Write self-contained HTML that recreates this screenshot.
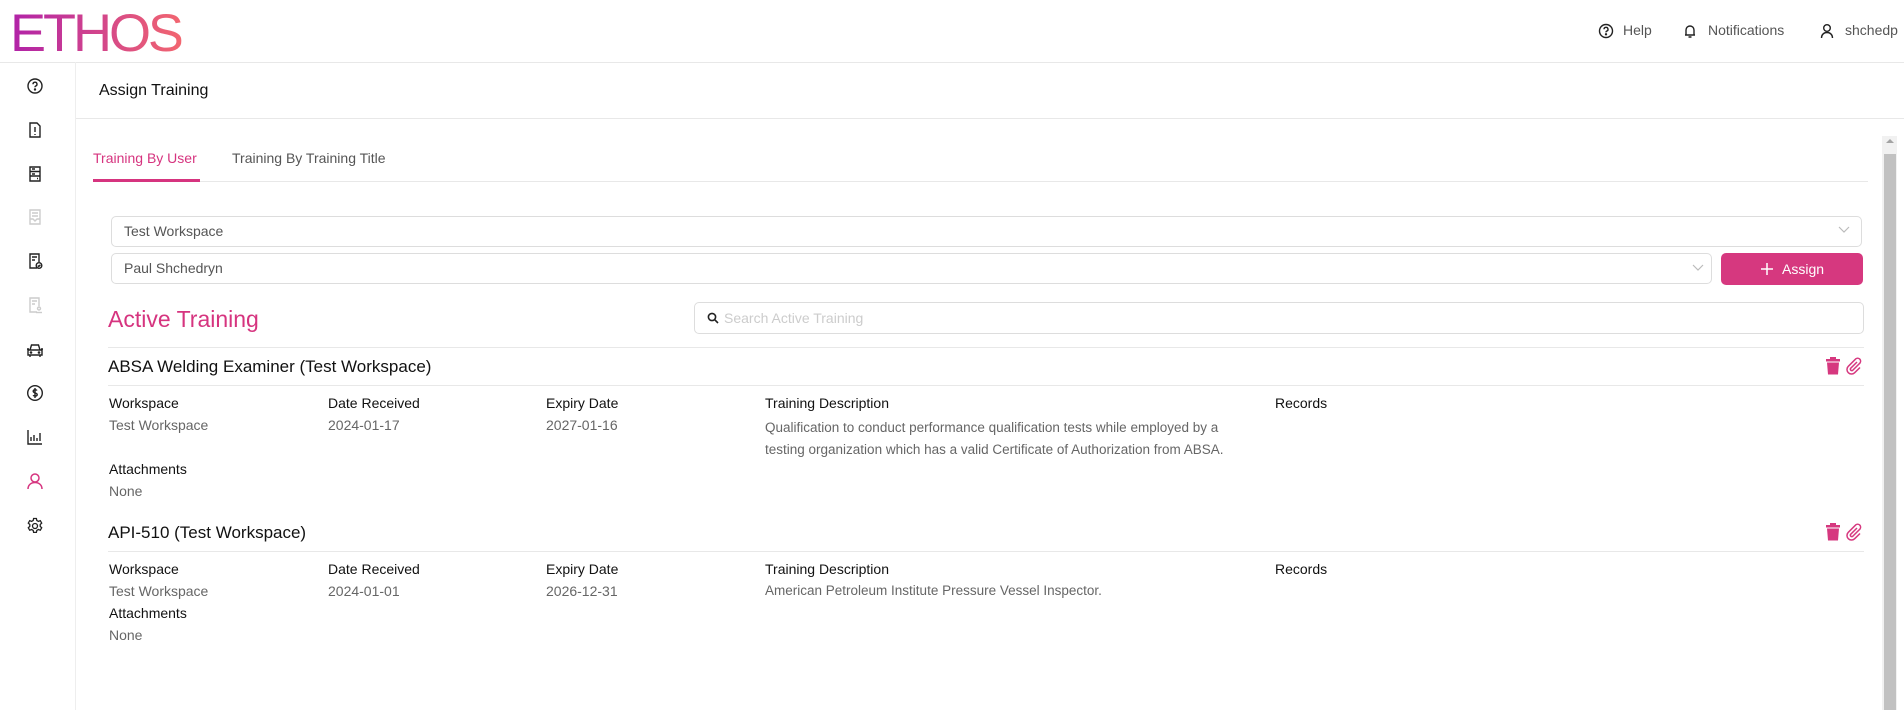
<!DOCTYPE html>
<html><head><meta charset="utf-8"><style>
*{margin:0;padding:0;box-sizing:border-box}
body{width:1904px;height:710px;overflow:hidden;background:#fff;font-family:"Liberation Sans",sans-serif;color:#222;position:relative}
.a{position:absolute;white-space:nowrap}
.hl{position:absolute;height:1px;background:#e8e8e8}
.lbl{font-size:14px;color:#111}
.val{font-size:14px;color:#666}
.ic{position:absolute;left:26px;width:18px;height:18px}
</style></head><body>
<div class="a" style="left:10px;top:4px;font-size:53px;letter-spacing:-3px;font-family:'Liberation Sans',sans-serif;background:linear-gradient(90deg,#b022a8,#f26670);-webkit-background-clip:text;color:transparent;line-height:60px;transform:scaleX(1.02);transform-origin:left">ETHOS</div>
<div class="hl" style="left:0;top:62px;width:1904px"></div>
<div style="position:absolute;left:75px;top:62px;width:1px;height:648px;background:#eee"></div>

<!-- header right -->
<svg class="a" style="left:1598px;top:23px" width="16" height="16" viewBox="0 0 16 16" fill="none" stroke="#222" stroke-width="1.4"><circle cx="8" cy="8" r="6.5"/><path d="M6 6.3a2 2 0 1 1 2.6 1.9c-.5.2-.6.6-.6 1.2"/><circle cx="8" cy="11.3" r=".5" fill="#222"/></svg>
<div class="a" style="left:1623px;top:22px;font-size:14px;color:#555">Help</div>
<svg class="a" style="left:1683px;top:23px" width="14" height="16" viewBox="0 0 14 16" fill="none" stroke="#222" stroke-width="1.4"><path d="M3 12V7a4 4 0 0 1 8 0v5H2h10M5.5 14h3"/></svg>
<div class="a" style="left:1708px;top:22px;font-size:14px;color:#555">Notifications</div>
<svg class="a" style="left:1820px;top:23px" width="14" height="16" viewBox="0 0 14 16" fill="none" stroke="#222" stroke-width="1.4"><circle cx="7" cy="5" r="3.3"/><path d="M1.5 15c0-3.5 2.5-5.5 5.5-5.5s5.5 2 5.5 5.5"/></svg>
<div class="a" style="left:1845px;top:22px;font-size:14px;color:#555">shchedp</div>

<!-- sidebar -->
<svg class="ic" style="top:77px" viewBox="0 0 18 18" fill="none" stroke="#222" stroke-width="1.4"><circle cx="9" cy="9" r="7"/><path d="M7 7.2a2 2 0 1 1 2.6 1.9c-.5.2-.6.6-.6 1.2"/><circle cx="9" cy="12.5" r=".5" fill="#222"/></svg>
<svg class="ic" style="top:121px" viewBox="0 0 18 18" fill="none" stroke="#222" stroke-width="1.4"><path d="M4 2h7l3 3v11H4z M9 6v5 M9 13v1"/></svg>
<svg class="ic" style="top:165px" viewBox="0 0 18 18" fill="none" stroke="#222" stroke-width="1.4"><path d="M4 2h10v14H4z M4 6.5h10 M4 11h10 M6 4h3 M6 9h3 M11 13.5h1"/></svg>
<svg class="ic" style="top:208px" viewBox="0 0 18 18" fill="none" stroke="#ccc" stroke-width="1.4"><path d="M4 2h10v14H4z M6 5h6 M6 8h6 M4 11h3l2 2 2-2h3"/></svg>
<svg class="ic" style="top:252px" viewBox="0 0 18 18" fill="none" stroke="#222" stroke-width="1.4"><path d="M11 16H4V2h9v8 M6 5h5 M6 8h3"/><circle cx="13" cy="13.5" r="2.8"/><path d="M11.8 13.5l1 1 1.6-1.7"/></svg>
<svg class="ic" style="top:296px" viewBox="0 0 18 18" fill="none" stroke="#ccc" stroke-width="1.4"><path d="M11 16H4V2h9v8 M6 5h5 M6 8h3"/><circle cx="13" cy="12.5" r="1.5"/><path d="M10 16.5h6"/></svg>
<svg class="ic" style="top:341px" viewBox="0 0 18 18" fill="none" stroke="#222" stroke-width="1.4"><path d="M2 9h14v5H2z M4 9l1.5-5h7L14 9 M4 14v2 M14 14v2 M1 8h2 M15 8h2"/><circle cx="5" cy="11.5" r=".6" fill="#222"/><circle cx="13" cy="11.5" r=".6" fill="#222"/></svg>
<svg class="ic" style="top:384px" viewBox="0 0 18 18" fill="none" stroke="#222" stroke-width="1.4"><circle cx="9" cy="9" r="7.3"/><path d="M11 6.5c-.5-.8-3.8-1.2-3.8.8 0 2 4 1.2 4 3.3 0 2-3.5 1.6-4 .6 M9 4v10"/></svg>
<svg class="ic" style="top:428px" viewBox="0 0 18 18" fill="none" stroke="#222" stroke-width="1.4"><path d="M2 2v14h14 M5 13V9 M8 13V7 M11 13v-3 M14 13V5"/></svg>
<svg class="ic" style="top:472px" viewBox="0 0 18 18" fill="none" stroke="#d6347f" stroke-width="1.5"><circle cx="9" cy="6" r="4"/><path d="M2 17c0-4 3-6.5 7-6.5s7 2.5 7 6.5"/></svg>
<svg class="ic" style="top:517px" viewBox="0 0 18 18" fill="none" stroke="#222" stroke-width="1.3"><circle cx="9" cy="9" r="2.5"/><path d="M7.6 1.5h2.8l.4 2 1.6.9 1.9-.7 1.4 2.4-1.5 1.4v1.9l1.5 1.4-1.4 2.4-1.9-.7-1.6.9-.4 2H7.6l-.4-2-1.6-.9-1.9.7-1.4-2.4 1.5-1.4V7.5L2.3 6.1l1.4-2.4 1.9.7 1.6-.9z"/></svg>

<!-- content -->
<div class="a" style="left:99px;top:82px;font-size:16px;color:#111">Assign Training</div>
<div class="hl" style="left:76px;top:118px;width:1828px"></div>
<div style="position:absolute;left:1882px;top:136px;width:15px;height:574px;background:#f1f1f1"></div>
<div style="position:absolute;left:1884px;top:154px;width:12px;height:556px;background:#c1c1c1"></div>
<div class="a" style="left:1886px;top:139px;width:0;height:0;border-left:4px solid transparent;border-right:4px solid transparent;border-bottom:4px solid #a3a3a3"></div>

<div class="a" style="left:93px;top:150px;font-size:14px;color:#d6347f">Training By User</div>
<div class="a" style="left:232px;top:150px;font-size:14px;color:#555">Training By Training Title</div>
<div class="hl" style="left:93px;top:181px;width:1775px"></div>
<div style="position:absolute;left:93px;top:179px;width:107px;height:3px;background:#d6347f"></div>

<div style="position:absolute;left:111px;top:216px;width:1751px;height:31px;border:1px solid #ddd;border-radius:5px"></div>
<div class="a" style="left:124px;top:223px;font-size:14px;color:#555">Test Workspace</div>
<svg class="a" style="left:1838px;top:226px" width="12" height="8" viewBox="0 0 12 8" fill="none" stroke="#bbb" stroke-width="1.2"><path d="M1 1l5 5 5-5"/></svg>
<div style="position:absolute;left:111px;top:253px;width:1601px;height:31px;border:1px solid #ddd;border-radius:5px"></div>
<div class="a" style="left:124px;top:260px;font-size:14px;color:#555">Paul Shchedryn</div>
<svg class="a" style="left:1692px;top:264px" width="12" height="8" viewBox="0 0 12 8" fill="none" stroke="#bbb" stroke-width="1.2"><path d="M1 1l5 5 5-5"/></svg>
<div style="position:absolute;left:1721px;top:253px;width:142px;height:32px;background:#d6387f;border-radius:5px"></div>
<svg class="a" style="left:1760px;top:262px" width="14" height="14" viewBox="0 0 14 14" stroke="#fff" stroke-width="1.5"><path d="M7 1v12M1 7h12"/></svg>
<div class="a" style="left:1782px;top:261px;font-size:14px;color:#fff">Assign</div>

<div class="a" style="left:108px;top:306px;font-size:23px;color:#d6347f">Active Training</div>
<div style="position:absolute;left:694px;top:302px;width:1170px;height:32px;border:1px solid #ddd;border-radius:5px"></div>
<svg class="a" style="left:707px;top:312px" width="12" height="12" viewBox="0 0 12 12" fill="none" stroke="#222" stroke-width="1.6"><circle cx="5" cy="5" r="3.6"/><path d="M7.7 7.7L11 11"/></svg>
<div class="a" style="left:724px;top:310px;font-size:14px;color:#ccc">Search Active Training</div>
<div class="hl" style="left:108px;top:347px;width:1756px"></div>

<div class="a" style="left:108px;top:357px;font-size:17px;color:#111">ABSA Welding Examiner (Test Workspace)</div>
<div class="hl" style="left:108px;top:385px;width:1756px"></div>
<svg class="a" style="left:1825px;top:357px" width="16" height="18" viewBox="0 0 16 18" fill="#d6387f"><rect x="1" y="2" width="14" height="2.5"/><rect x="5" y="0" width="6" height="2"/><path d="M2 5.5h12l-1 12H3z"/></svg>
<svg class="a" style="left:1845px;top:357px" width="18" height="18" viewBox="0 0 18 18" fill="none" stroke="#d6387f" stroke-width="1.5"><path d="M12 5l-6.5 6.5a1.5 1.5 0 0 0 2 2L15 6a3 3 0 0 0-4.2-4.2L3.3 9.3a4.5 4.5 0 0 0 6.4 6.4L15 10.5"/></svg>

<div class="a lbl" style="left:109px;top:395px">Workspace</div>
<div class="a val" style="left:109px;top:417px">Test Workspace</div>
<div class="a lbl" style="left:328px;top:395px">Date Received</div>
<div class="a val" style="left:328px;top:417px">2024-01-17</div>
<div class="a lbl" style="left:546px;top:395px">Expiry Date</div>
<div class="a val" style="left:546px;top:417px">2027-01-16</div>
<div class="a lbl" style="left:765px;top:395px">Training Description</div>
<div class="a val" style="left:765px;top:417px;font-size:13.5px;line-height:22px">Qualification to conduct performance qualification tests while employed by a<br>testing organization which has a valid Certificate of Authorization from ABSA.</div>
<div class="a lbl" style="left:1275px;top:395px">Records</div>
<div class="a lbl" style="left:109px;top:461px">Attachments</div>
<div class="a val" style="left:109px;top:483px">None</div>

<div class="a" style="left:108px;top:523px;font-size:17px;color:#111">API-510 (Test Workspace)</div>
<div class="hl" style="left:108px;top:551px;width:1756px"></div>
<svg class="a" style="left:1825px;top:523px" width="16" height="18" viewBox="0 0 16 18" fill="#d6387f"><rect x="1" y="2" width="14" height="2.5"/><rect x="5" y="0" width="6" height="2"/><path d="M2 5.5h12l-1 12H3z"/></svg>
<svg class="a" style="left:1845px;top:523px" width="18" height="18" viewBox="0 0 18 18" fill="none" stroke="#d6387f" stroke-width="1.5"><path d="M12 5l-6.5 6.5a1.5 1.5 0 0 0 2 2L15 6a3 3 0 0 0-4.2-4.2L3.3 9.3a4.5 4.5 0 0 0 6.4 6.4L15 10.5"/></svg>

<div class="a lbl" style="left:109px;top:561px">Workspace</div>
<div class="a val" style="left:109px;top:583px">Test Workspace</div>
<div class="a lbl" style="left:328px;top:561px">Date Received</div>
<div class="a val" style="left:328px;top:583px">2024-01-01</div>
<div class="a lbl" style="left:546px;top:561px">Expiry Date</div>
<div class="a val" style="left:546px;top:583px">2026-12-31</div>
<div class="a lbl" style="left:765px;top:561px">Training Description</div>
<div class="a val" style="left:765px;top:583px;font-size:13.5px">American Petroleum Institute Pressure Vessel Inspector.</div>
<div class="a lbl" style="left:1275px;top:561px">Records</div>
<div class="a lbl" style="left:109px;top:605px">Attachments</div>
<div class="a val" style="left:109px;top:627px">None</div>
</body></html>
